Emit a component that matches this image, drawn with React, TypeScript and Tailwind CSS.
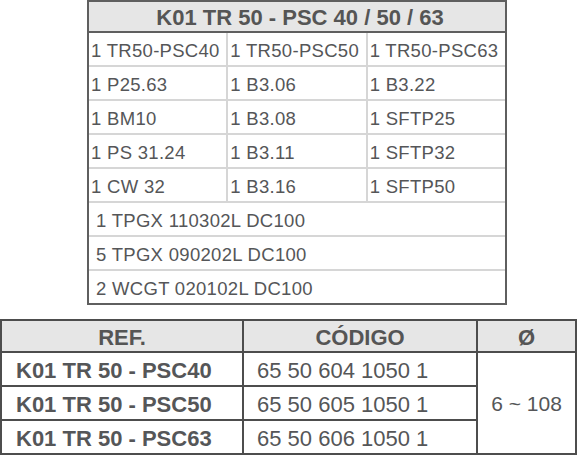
import React from "react";

const kit = [
  ["1 TR50-PSC40", "1 TR50-PSC50", "1 TR50-PSC63"],
  ["1 P25.63", "1 B3.06", "1 B3.22"],
  ["1 BM10", "1 B3.08", "1 SFTP25"],
  ["1 PS 31.24", "1 B3.11", "1 SFTP32"],
  ["1 CW 32", "1 B3.16", "1 SFTP50"],
];

const inserts = ["1 TPGX 110302L DC100", "5 TPGX 090202L DC100", "2 WCGT 020102L DC100"];

const refs = [
  ["K01 TR 50 - PSC40", "65 50 604 1050 1"],
  ["K01 TR 50 - PSC50", "65 50 605 1050 1"],
  ["K01 TR 50 - PSC63", "65 50 606 1050 1"],
];

export default function App() {
  return (
    <div className="w-[577px] h-[458px] bg-white text-[#555658] font-['Liberation_Sans',Arial,sans-serif]">
      {/* Kit contents */}
      <div className="ml-[87px] w-[420px] border-2 border-[#5f5f5f]">
        <div className="h-[31px] flex items-center justify-center pt-[2px] pl-[6px] bg-[#e6e6e6] border-b-2 border-[#5f5f5f] text-[22px] font-bold text-[#555]">
          K01 TR 50 - PSC 40 / 50 / 63
        </div>
        <div className="grid grid-cols-3 auto-rows-[32px] gap-[2px] bg-[#d6d6d6]">
          {kit.flatMap((row, i) =>
            row.map((c, j) => (
              <div key={`${i}-${j}`} className="bg-white flex items-center pt-[3px] pl-[2px] text-[18.5px] tracking-[0.3px] whitespace-nowrap">
                {c}
              </div>
            ))
          )}
          {inserts.map((c) => (
            <div key={c} className="col-span-3 bg-white flex items-center pt-[3px] pl-[7px] text-[18.5px] tracking-[0.3px]">
              {c}
            </div>
          ))}
        </div>
      </div>

      {/* Reference table */}
      <div className="mt-[14px] grid grid-cols-[240px_232px_97px] grid-rows-[30px_32px_32px_32px] gap-[2px] bg-[#4d4d4d] border-2 border-[#4d4d4d]">
        <div className="bg-[#e6e6e6] flex items-center justify-center pt-[3px] text-[22px] font-bold text-[#555]">REF.</div>
        <div className="bg-[#e6e6e6] flex items-center justify-center pt-[3px] text-[22px] font-bold text-[#555]">CÓDIGO</div>
        <div className="bg-[#e6e6e6] flex items-center justify-center pt-[3px] text-[22px] font-bold text-[#555]">Ø</div>
        {refs.map(([ref, code], i) => (
          <React.Fragment key={ref}>
            <div className="bg-white flex items-center pt-[3px] pl-[14px] text-[22px] font-bold whitespace-nowrap">{ref}</div>
            <div className="bg-white flex items-center pt-[3px] pl-[13px] text-[22px] whitespace-nowrap">{code}</div>
            {i === 0 && (
              <div className="row-span-3 bg-white flex items-center justify-center pt-[2px] text-[21px]">6 ~ 108</div>
            )}
          </React.Fragment>
        ))}
      </div>
    </div>
  );
}
